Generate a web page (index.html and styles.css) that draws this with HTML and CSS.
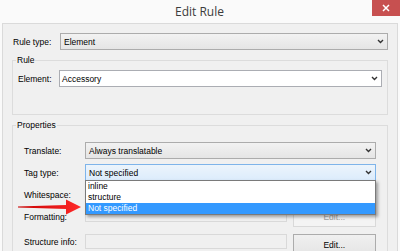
FILE: index.html
```html
<!DOCTYPE html>
<html lang="en">
<head>
    <meta charset="UTF-8">
    <title>Edit Rule</title>
    <link rel="stylesheet" href="styles.css">
</head>
<body>
    <div class="window">
        <div class="titlebar">
            <span class="title">Edit Rule</span>
            <div class="close">
                <svg width="8" height="8" viewBox="0 0 8 8"><path d="M1 1 L7 7 M7 1 L1 7" stroke="#fff" stroke-width="1.5" fill="none"/></svg>
            </div>
        </div>

        <div class="client">
            <div class="row">
                <label class="lbl lbl-type">Rule type:</label>
                <div class="combo">
                    <span>Element</span>
                    <svg class="chev" width="7" height="5" viewBox="0 0 7 5"><polyline points="1,1 3.5,3.5 6,1" fill="none" stroke="#333" stroke-width="1.4"/></svg>
                </div>
            </div>

            <fieldset class="group group-rule">
                <legend>Rule</legend>
                <div class="row">
                    <label class="lbl lbl-element">Element:</label>
                    <div class="combo combo-edit">
                        <span>Accessory</span>
                        <svg class="chev" width="7" height="5" viewBox="0 0 7 5"><polyline points="1,1 3.5,3.5 6,1" fill="none" stroke="#333" stroke-width="1.4"/></svg>
                    </div>
                </div>
            </fieldset>

            <fieldset class="group group-props">
                <legend>Properties</legend>
                <div class="row prop-row">
                    <label class="lbl lbl-prop">Translate:</label>
                    <div class="combo">
                        <span>Always translatable</span>
                        <svg class="chev" width="7" height="5" viewBox="0 0 7 5"><polyline points="1,1 3.5,3.5 6,1" fill="none" stroke="#333" stroke-width="1.4"/></svg>
                    </div>
                </div>
                <div class="row prop-row tag-row">
                    <label class="lbl lbl-prop">Tag type:</label>
                    <div class="combo combo-focus">
                        <span>Not specified</span>
                        <svg class="chev" width="7" height="5" viewBox="0 0 7 5"><polyline points="1,1 3.5,3.5 6,1" fill="none" stroke="#333" stroke-width="1.4"/></svg>
                    </div>
                    <ul class="dropdown">
                        <li>inline</li>
                        <li>structure</li>
                        <li class="selected">Not specified</li>
                    </ul>
                </div>
                <div class="row prop-row">
                    <label class="lbl lbl-prop">Whitespace:</label>
                    <div class="combo">
                        <span></span>
                    </div>
                </div>
                <div class="row format-row">
                    <label class="lbl lbl-prop">Formatting:</label>
                    <div class="textbox disabled"></div>
                    <div class="btn disabled">Edit...</div>
                </div>
                <div class="row struct-row">
                    <label class="lbl lbl-prop">Structure info:</label>
                    <div class="textbox disabled"></div>
                    <div class="btn">Edit...</div>
                </div>
            </fieldset>
        </div>
    </div>

    <svg class="arrow" width="64" height="16" viewBox="0 0 64 16">
        <defs>
            <linearGradient id="red" x1="0" y1="0" x2="1" y2="0">
                <stop offset="0" stop-color="#c80000"/>
                <stop offset="1" stop-color="#ff2a2a"/>
            </linearGradient>
        </defs>
        <polygon points="0,7.5 48,6 48,0.5 63,8 48,15.5 48,10 0,8.5" fill="url(#red)"/>
    </svg>
</body>
</html>
```

FILE: styles.css
```css
body {
    margin: 0;
    width: 400px;
    height: 251px;
    overflow: hidden;
    background-color: #fafafa;
    font-family: "Liberation Sans", Arial, sans-serif;
    font-size: 8.5px;
    color: #000;
    position: relative;
}
.titlebar {
    height: 23px;
    display: flex;
    justify-content: center;
    align-items: center;
}
.title {
    font-family: "Open Sans", sans-serif;
    font-size: 12px;
    color: #3c3c3c;
    margin-left: -1px;
}
.close {
    position: absolute;
    top: 0;
    right: 0;
    width: 28px;
    height: 16px;
    background-color: #c75050;
    display: flex;
    justify-content: center;
    align-items: center;
}
.client {
    margin: 0 2px;
    height: 228px;
    overflow: hidden;
    border: 1px solid #dadada;
    border-bottom: none;
    background-color: #f0f0f0;
    padding: 9px 9px 0 10px;
}
.row {
    display: flex;
    align-items: center;
}
.lbl {
    flex: none;
    white-space: nowrap;
}
.lbl-type {
    width: 47px;
}
.lbl-element {
    width: 41px;
}
.lbl-prop {
    width: 61px;
}
.combo {
    flex: 1;
    height: 17px;
    box-sizing: border-box;
    border: 1px solid #acacac;
    background: linear-gradient(#f2f2f2, #e5e5e5);
    padding: 0 3px;
    display: flex;
    align-items: center;
    justify-content: space-between;
}
.combo-edit {
    background: #fff;
    border-color: #abadb3;
    padding-left: 2px;
}
.combo-focus {
    border-color: #7eb4ea;
    background: linear-gradient(#ecf4fc, #dcecfc);
}
.group {
    margin: 4px 0 0 -1px;
    border: 1px solid #dcdcdc;
    min-inline-size: 0;
}
.group legend {
    padding: 0 1px;
    line-height: 13px;
}
.group-rule {
    padding: 0 5px 27px 5px;
}
.group-rule legend {
    margin-left: -2px;
}
.group-rule .row {
    margin-top: 3px;
}
.group-props {
    padding: 0 11px 20px 11px;
}
.group-props legend {
    margin-left: -8px;
}
.prop-row {
    margin-top: 5px;
}
.prop-row:first-of-type {
    margin-top: 10px;
}
.tag-row {
    position: relative;
}
.dropdown {
    position: absolute;
    left: 61px;
    right: 0;
    top: 16px;
    margin: 0;
    padding: 0;
    list-style: none;
    background: #fff;
    border: 1px solid #7a7a7a;
    box-shadow: 2px 2px 3px rgba(0, 0, 0, 0.35);
    z-index: 2;
}
.dropdown li {
    height: 11px;
    line-height: 11px;
    padding-left: 2px;
}
.dropdown .selected {
    background-color: #3399ff;
    color: #fff;
}
.format-row {
    margin-top: 3px;
    height: 21px;
}
.struct-row {
    margin-top: 7px;
    align-items: flex-start;
}
.struct-row .lbl {
    line-height: 16px;
}
.format-row .textbox {
    align-self: flex-start;
    margin-top: 1px;
}
.textbox {
    width: 203px;
    height: 15px;
    box-sizing: border-box;
    border: 1px solid #d9d9d9;
    background: #f0f0f0;
}
.btn {
    margin-left: 6px;
    width: 84px;
    height: 21px;
    box-sizing: border-box;
    border: 1px solid #acacac;
    background: linear-gradient(#f0f0f0, #e5e5e5);
    display: flex;
    justify-content: center;
    align-items: center;
}
.btn.disabled {
    border-color: #d9d9d9;
    background: #f4f4f4;
    color: #a0a0a0;
}
.arrow {
    position: absolute;
    left: 18px;
    top: 199px;
    z-index: 3;
}
```
